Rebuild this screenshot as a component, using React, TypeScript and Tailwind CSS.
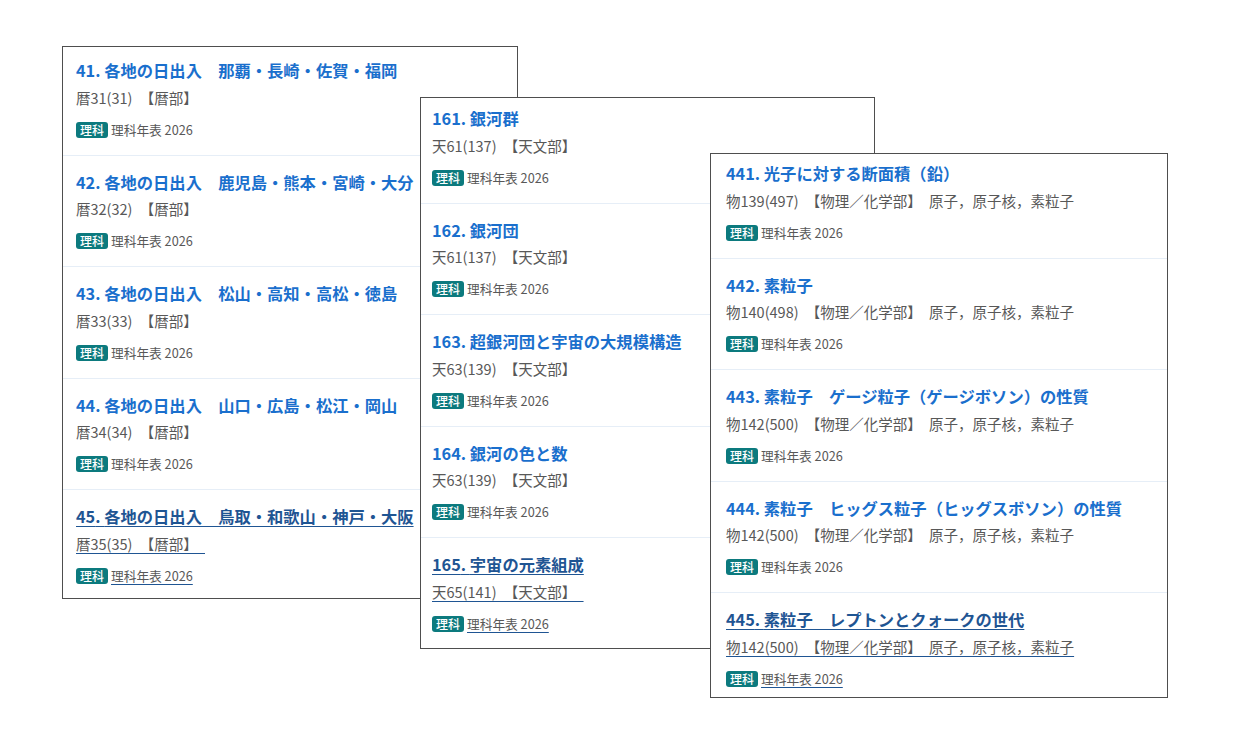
import type { FC } from "react";

type entry = {
  no: number;
  title: string;
  meta: string;
};

type panel = {
  id: number;
  pos: string;
  shift: string;
  pad: string;
  items: entry[];
};

const panels: panel[] = [
  {
    id: 1,
    pos: "left-[62px] top-[46px] w-[456px] h-[553px]",
    shift: "-mt-[3px]",
    pad: "px-[13px]",
    items: [
      { no: 41, title: "各地の日出入　那覇・長崎・佐賀・福岡", meta: "暦31(31)　【暦部】" },
      { no: 42, title: "各地の日出入　鹿児島・熊本・宮崎・大分", meta: "暦32(32)　【暦部】" },
      { no: 43, title: "各地の日出入　松山・高知・高松・徳島", meta: "暦33(33)　【暦部】" },
      { no: 44, title: "各地の日出入　山口・広島・松江・岡山", meta: "暦34(34)　【暦部】" },
      { no: 45, title: "各地の日出入　鳥取・和歌山・神戸・大阪", meta: "暦35(35)　【暦部】　" },
    ],
  },
  {
    id: 2,
    pos: "left-[420px] top-[97px] w-[455px] h-[552px]",
    shift: "-mt-[6px]",
    pad: "px-[11px]",
    items: [
      { no: 161, title: "銀河群", meta: "天61(137)　【天文部】" },
      { no: 162, title: "銀河団", meta: "天61(137)　【天文部】" },
      { no: 163, title: "超銀河団と宇宙の大規模構造", meta: "天63(139)　【天文部】" },
      { no: 164, title: "銀河の色と数", meta: "天63(139)　【天文部】" },
      { no: 165, title: "宇宙の元素組成", meta: "天65(141)　【天文部】　" },
    ],
  },
  {
    id: 3,
    pos: "left-[710px] top-[153px] w-[458px] h-[545px]",
    shift: "-mt-[7px]",
    pad: "px-[15px]",
    items: [
      { no: 441, title: "光子に対する断面積（鉛）", meta: "物139(497)　【物理／化学部】　原子，原子核，素粒子" },
      { no: 442, title: "素粒子", meta: "物140(498)　【物理／化学部】　原子，原子核，素粒子" },
      { no: 443, title: "素粒子　ゲージ粒子（ゲージボソン）の性質", meta: "物142(500)　【物理／化学部】　原子，原子核，素粒子" },
      { no: 444, title: "素粒子　ヒッグス粒子（ヒッグスボソン）の性質", meta: "物142(500)　【物理／化学部】　原子，原子核，素粒子" },
      { no: 445, title: "素粒子　レプトンとクォークの世代", meta: "物142(500)　【物理／化学部】　原子，原子核，素粒子" },
    ],
  },
];

// the last row of each list is shown in its hover state
const line = "underline decoration-[#1f5593] underline-offset-[3px]";

const Item: FC<{ item: entry; hover: boolean; pad: string }> = ({ item, hover, pad }) => (
  <a href="#" className={"block pt-[15px] pb-[15px] border-b border-[#e6eef7] no-underline " + pad}>
    <div
      className={
        "h-[22px] leading-[22px] text-[16.3px] font-bold whitespace-nowrap " +
        (hover ? "text-[#1f5593]" : "text-[#1a6fcd]")
      }
    >
      <span className={hover ? line : ""}>
        {item.no}. {item.title}
      </span>
    </div>
    <div className="mt-[5.5px] h-[22px] leading-[22px] text-[14.5px] text-[#585858] whitespace-pre">
      <span className={hover ? line : ""}>{item.meta}</span>
    </div>
    <div className="mt-[11px] h-[20px] flex items-center text-[12.7px] text-[#585858]">
      <span className="inline-block rounded-[3px] bg-[#0c7a7e] text-white text-[12px] font-medium leading-[16px] px-[4px] mr-[3px]">
        理科
      </span>
      <span className={hover ? line : ""}>理科年表 2026</span>
    </div>
  </a>
);

export default function App() {
  return (
    <main
      className="relative w-[1234px] h-[739px] bg-white overflow-hidden"
      style={{ fontFamily: '"Noto Sans CJK JP", "Noto Sans", sans-serif' }}
    >
      {panels.map((p) => (
        <section
          key={p.id}
          className={"absolute bg-white border border-[#4e4e4e] overflow-hidden " + p.pos}
        >
          <div className={p.shift}>
            {p.items.map((it, i) => (
              <Item key={it.no} item={it} pad={p.pad} hover={i === p.items.length - 1} />
            ))}
          </div>
        </section>
      ))}
    </main>
  );
}
